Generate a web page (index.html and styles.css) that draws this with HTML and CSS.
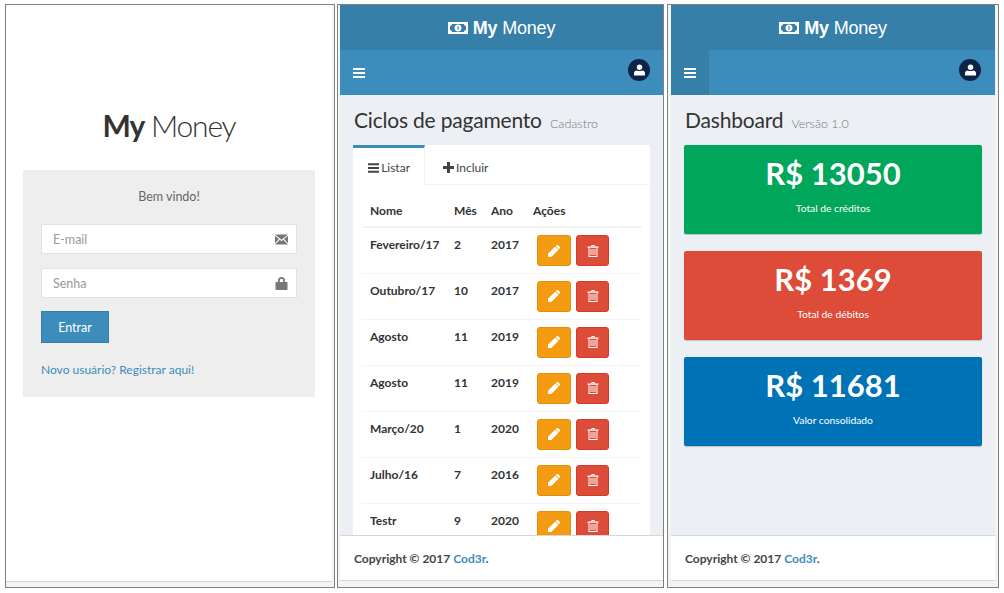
FILE: index.html
```html
<!DOCTYPE html>
<html lang="pt-BR">

<head>
    <meta charset="UTF-8">
    <title>My Money</title>
    <link rel="stylesheet" href="styles.css">
</head>

<body>
    <svg class="defs" width="0" height="0">
        <symbol id="i-bars" viewBox="0 0 12 10"><path d="M0 0h12v2H0zM0 4h12v2H0zM0 8h12v2H0z"/></symbol>
        <symbol id="i-plus" viewBox="0 0 11 11"><path d="M4 0h3v4h4v3H7v4H4V7H0V4h4z"/></symbol>
        <symbol id="i-pencil" viewBox="0 0 12 12"><path d="M0 12V8.800L7.300 1.500 10.500 4.700 3.200 12zM8.200 .6C9 -.2 9.700 -.2 10.400 .5L11.500 1.600C12.200 2.300 12.200 3 11.400 3.800L11 4.200 7.800 1z"/></symbol>
        <symbol id="i-trash" viewBox="0 0 11 12"><path fill-rule="evenodd" d="M3.500 1.500 4.200 0H6.800L7.500 1.500H11V2.700H10V12H1V2.700H0V1.500zM4.600 1.500H6.400L6.200 1H4.800zM2 2.700V11H9V2.700zM3 4H4V10H3zM5 4H6V10H5zM7 4H8V10H7z"/></symbol>
        <symbol id="i-user" viewBox="0 0 12 12"><circle cx="6" cy="3" r="3"/><path d="M0 12V9.500C0 7.500 1.500 6.500 3 6.500 4 7.300 8 7.300 9 6.500 10.500 6.500 12 7.500 12 9.500V12z"/></symbol>
        <symbol id="i-money" viewBox="0 0 20 12"><path fill-rule="evenodd" d="M0 0H20V12H0zM4 2C4 3.200 3.200 4 2 4V8C3.200 8 4 8.800 4 10H16C16 8.800 16.800 8 18 8V4C16.800 4 16 3.200 16 2zM10 2.500C12 2.500 13.500 4 13.500 6S12 9.500 10 9.500 6.500 8 6.500 6 8 2.500 10 2.500zM9 4.500V5.300H9.600V7.800H10.700V4.500z"/></symbol>
        <symbol id="i-mail" viewBox="0 0 14 11"><path d="M0 0H14L7 5.800zM0 1.500 4.300 5 0 9.500zM14 1.500V9.500L9.700 5zM5.200 5.800 7 7.300 8.800 5.800 14 11H0z"/></symbol>
        <symbol id="i-lock" viewBox="0 0 12 13"><path fill-rule="evenodd" d="M2.500 5V3.500C2.500 1.300 3.800 0 6 0S9.500 1.300 9.500 3.500V5H11C11.600 5 12 5.400 12 6V12C12 12.600 11.600 13 11 13H1C.4 13 0 12.600 0 12V6C0 5.400 .4 5 1 5zM4.300 5H7.700V3.500C7.700 2.500 7 1.800 6 1.800S4.300 2.500 4.300 3.500z"/></symbol>
    </svg>

    <div class="shots">
        <!-- login -->
        <section class="shot shot-login">
            <div class="login-page">
                <h1 class="login-logo"><b>My</b> Money</h1>
                <form class="login-box">
                    <p class="login-msg">Bem vindo!</p>
                    <div class="field">
                        <input type="text" placeholder="E-mail">
                        <svg class="field-icon mail"><use href="#i-mail"/></svg>
                    </div>
                    <div class="field">
                        <input type="password" placeholder="Senha">
                        <svg class="field-icon lock"><use href="#i-lock"/></svg>
                    </div>
                    <button class="btn-entrar" type="button">Entrar</button>
                    <a class="login-link" href="#">Novo usuário? Registrar aqui!</a>
                </form>
            </div>
        </section>

        <!-- ciclos -->
        <section class="shot shot-ciclos">
            <div class="app">
                <header class="brand">
                    <svg class="brand-icon"><use href="#i-money"/></svg>
                    <span><b>My</b> Money</span>
                </header>
                <nav class="navbar">
                    <a class="toggle" href="#"><svg class="toggle-icon"><use href="#i-bars"/></svg></a>
                    <span class="avatar"><svg class="avatar-icon"><use href="#i-user"/></svg></span>
                </nav>
                <main class="content">
                    <h2 class="page-title">Ciclos de pagamento <small>Cadastro</small></h2>
                    <div class="tabs">
                        <ul class="tab-list">
                            <li class="tab active"><svg class="tab-icon bars"><use href="#i-bars"/></svg>Listar</li>
                            <li class="tab"><svg class="tab-icon plus"><use href="#i-plus"/></svg>Incluir</li>
                        </ul>
                        <div class="tab-body">
                            <table class="ciclos">
                                <thead>
                                    <tr><th>Nome</th><th>Mês</th><th>Ano</th><th>Ações</th></tr>
                                </thead>
                                <tbody>
                                    <tr>
                                        <td>Fevereiro/17</td><td>2</td><td>2017</td>
                                        <td><span class="btn warn"><svg><use href="#i-pencil"/></svg></span><span class="btn danger"><svg><use href="#i-trash"/></svg></span></td>
                                    </tr>
                                    <tr>
                                        <td>Outubro/17</td><td>10</td><td>2017</td>
                                        <td><span class="btn warn"><svg><use href="#i-pencil"/></svg></span><span class="btn danger"><svg><use href="#i-trash"/></svg></span></td>
                                    </tr>
                                    <tr>
                                        <td>Agosto</td><td>11</td><td>2019</td>
                                        <td><span class="btn warn"><svg><use href="#i-pencil"/></svg></span><span class="btn danger"><svg><use href="#i-trash"/></svg></span></td>
                                    </tr>
                                    <tr>
                                        <td>Agosto</td><td>11</td><td>2019</td>
                                        <td><span class="btn warn"><svg><use href="#i-pencil"/></svg></span><span class="btn danger"><svg><use href="#i-trash"/></svg></span></td>
                                    </tr>
                                    <tr>
                                        <td>Março/20</td><td>1</td><td>2020</td>
                                        <td><span class="btn warn"><svg><use href="#i-pencil"/></svg></span><span class="btn danger"><svg><use href="#i-trash"/></svg></span></td>
                                    </tr>
                                    <tr>
                                        <td>Julho/16</td><td>7</td><td>2016</td>
                                        <td><span class="btn warn"><svg><use href="#i-pencil"/></svg></span><span class="btn danger"><svg><use href="#i-trash"/></svg></span></td>
                                    </tr>
                                    <tr>
                                        <td>Testr</td><td>9</td><td>2020</td>
                                        <td><span class="btn warn"><svg><use href="#i-pencil"/></svg></span><span class="btn danger"><svg><use href="#i-trash"/></svg></span></td>
                                    </tr>
                                </tbody>
                            </table>
                        </div>
                    </div>
                </main>
                <footer class="footer">Copyright © 2017 <a href="#">Cod3r</a>.</footer>
            </div>
        </section>

        <!-- dashboard -->
        <section class="shot shot-dash">
            <div class="app">
                <header class="brand">
                    <svg class="brand-icon"><use href="#i-money"/></svg>
                    <span><b>My</b> Money</span>
                </header>
                <nav class="navbar">
                    <a class="toggle hover" href="#"><svg class="toggle-icon"><use href="#i-bars"/></svg></a>
                    <span class="avatar"><svg class="avatar-icon"><use href="#i-user"/></svg></span>
                </nav>
                <main class="content">
                    <h2 class="page-title">Dashboard <small>Versão 1.0</small></h2>
                    <div class="small-box green">
                        <h3>R$ 13050</h3>
                        <p>Total de créditos</p>
                    </div>
                    <div class="small-box red">
                        <h3>R$ 1369</h3>
                        <p>Total de débitos</p>
                    </div>
                    <div class="small-box blue">
                        <h3>R$ 11681</h3>
                        <p>Valor consolidado</p>
                    </div>
                </main>
                <footer class="footer">Copyright © 2017 <a href="#">Cod3r</a>.</footer>
            </div>
        </section>
    </div>
</body>

</html>
```

FILE: styles.css
```css
* {
    box-sizing: border-box;
}

body {
    margin: 0;
    background-color: #fff;
    font-family: Lato, "Noto Sans", sans-serif;
    font-size: 14px;
    color: #333;
}

.defs {
    display: block;
    height: 0;
}

.shots {
    display: flex;
    gap: 2px;
    padding: 4px 5px 5px;
    height: 593px;
}

.shot {
    height: 584px;
    border: 1px solid #808080;
    background-color: #f4f4f4;
    flex: none;
}

.shot-login {
    width: 330px;
    padding: 0 2px 5px 0;
}

.shot-ciclos {
    width: 327px;
    padding: 0 0 6px 2px;
}

.shot-dash {
    width: 332px;
    margin-left: 1px;
    padding: 0 3px 6px 3px;
}

/* login */
.login-page {
    height: 100%;
    background-color: #fff;
    border-bottom: 1px solid #d2d6de;
    padding: 98px 17px 0;
}

.login-logo {
    margin: 0 0 23px;
    text-align: center;
    font-size: 30px;
    line-height: 44px;
    font-weight: 300;
    letter-spacing: -1.2px;
}

.login-logo b {
    font-weight: 700;
}

.login-box {
    display: flex;
    flex-direction: column;
    height: 227px;
    padding: 19px 18px;
    background-color: #eee;
}

.login-msg {
    margin: 0 0 19px;
    text-align: center;
    font-size: 12.5px;
    line-height: 16px;
    color: #666;
}

.field {
    display: flex;
    align-items: center;
    height: 30px;
    margin-bottom: 14px;
    padding-right: 8px;
    border: 1px solid #dfe2e8;
    background-color: #fff;
}

.field + .field {
    margin-bottom: 13px;
}

.field input {
    flex: 1;
    min-width: 0;
    border: 0;
    outline: 0;
    padding: 0 11px;
    font-family: inherit;
    font-size: 12.5px;
    background: transparent;
}

.field input::placeholder {
    color: #999;
}

.field-icon {
    width: 13px;
    fill: #777;
}

.field-icon.mail {
    height: 11px;
}

.field-icon.lock {
    height: 13px;
}

.btn-entrar {
    width: 68px;
    height: 32px;
    border: 1px solid #367fa9;
    background-color: #3c8dbc;
    color: #fff;
    font-family: inherit;
    font-size: 12.5px;
}

.login-link {
    margin-top: 19px;
    font-size: 12px;
    line-height: 16px;
    color: #3c8dbc;
    text-decoration: none;
}

/* app */
.app {
    display: flex;
    flex-direction: column;
    height: 100%;
    background-color: #ecf0f5;
}

.brand {
    display: flex;
    align-items: center;
    justify-content: center;
    gap: 5px;
    flex: none;
    height: 45px;
    padding-top: 1px;
    background-color: #367fa9;
    color: #fff;
    font-family: "Liberation Sans", Arial, sans-serif;
    font-size: 18px;
    letter-spacing: -0.2px;
}

.brand-icon {
    width: 20px;
    height: 12px;
    fill: #fff;
}

.navbar {
    display: flex;
    align-items: center;
    justify-content: space-between;
    flex: none;
    height: 45px;
    padding-right: 13px;
    background-color: #3c8dbc;
}

.shot-dash .navbar {
    padding-right: 14px;
}

.toggle {
    display: flex;
    align-items: center;
    justify-content: center;
    width: 38px;
    height: 45px;
}

.toggle.hover {
    background-color: #367fa9;
}

.toggle-icon {
    width: 12px;
    height: 10px;
    fill: #fff;
}

.avatar {
    display: flex;
    align-items: center;
    justify-content: center;
    width: 22px;
    height: 22px;
    margin-top: -5px;
    border-radius: 50%;
    background-color: #0d2347;
}

.avatar-icon {
    width: 11px;
    height: 12px;
    fill: #fff;
}

.content {
    flex: 1;
    min-height: 0;
    overflow: hidden;
    padding: 12px 13px 0;
}

.page-title {
    margin: 0 0 12px 1px;
    font-size: 21px;
    line-height: 26px;
    font-weight: 400;
    letter-spacing: -0.2px;
}

.page-title small {
    margin-left: 3px;
    font-size: 12.5px;
    line-height: 1;
    font-weight: 300;
    letter-spacing: 0;
    color: #777;
}

.tabs {
    background-color: #fff;
}

.tab-list {
    display: flex;
    margin: 0;
    padding: 0;
    list-style: none;
    border-bottom: 1px solid #f4f4f4;
    height: 40px;
}

.tab {
    display: flex;
    align-items: center;
    padding: 5px 18px 0;
    height: 40px;
    font-size: 12px;
    color: #444;
}

.tab.active {
    width: 72px;
    border-top: 3px solid #3c8dbc;
    border-right: 1px solid #f4f4f4;
    background-color: #fff;
    padding: 2px 14px 0 15px;
}

.tab-icon {
    margin-right: 2px;
    fill: #444;
}

.tab-icon.bars {
    width: 12px;
    height: 10px;
}

.tab-icon.plus {
    width: 11px;
    height: 11px;
}

.tab-body {
    padding: 9px 8px 0 9px;
}

.ciclos {
    width: 280px;
    border-collapse: collapse;
    table-layout: fixed;
}

.ciclos th,
.ciclos td {
    padding: 8px;
    text-align: left;
    vertical-align: top;
    font-size: 12px;
    line-height: 16px;
    font-weight: 700;
}

.ciclos th {
    height: 33px;
    padding-top: 9px;
    padding-bottom: 6px;
    border-bottom: 2px solid #f4f4f4;
}

.ciclos td {
    height: 46px;
    padding-top: 9px;
    border-bottom: 1px solid #f4f4f4;
    color: #333;
}

.ciclos th:nth-child(1) {
    width: 84px;
}

.ciclos th:nth-child(2) {
    width: 37px;
}

.ciclos th:nth-child(3) {
    width: 42px;
}

.ciclos td:last-child {
    padding: 7px 0 0 12px;
}

.btn {
    display: inline-flex;
    align-items: center;
    justify-content: center;
    width: 34px;
    height: 31px;
    border-radius: 3px;
    vertical-align: top;
}

.btn svg {
    fill: #fff;
    width: 12px;
    height: 12px;
}

.btn + .btn {
    width: 33px;
    margin-left: 5px;
}

.warn {
    background-color: #f39c12;
    border: 1px solid #e08e0b;
}

.danger {
    background-color: #dd4b39;
    border: 1px solid #d73925;
}

.footer {
    flex: none;
    height: 46px;
    padding: 15px 14px;
    background-color: #fff;
    border-top: 1px solid #d2d6de;
    border-bottom: 1px solid #d2d6de;
    font-size: 12px;
    line-height: 16px;
    font-weight: 700;
    color: #444;
}

.footer a {
    color: #3c8dbc;
    text-decoration: none;
}

/* dashboard */
.small-box {
    height: 89px;
    margin-bottom: 17px;
    padding-top: 9px;
    border-radius: 2px;
    color: #fff;
    text-align: center;
    box-shadow: 0 1px 1px rgba(0, 0, 0, 0.2);
}

.small-box h3 {
    margin: 0 0 9px;
    font-size: 31px;
    line-height: 38px;
    font-weight: 700;
}

.small-box p {
    margin: 0;
    font-size: 10.3px;
    line-height: 14px;
}

.green {
    background-color: #00a65a;
}

.red {
    background-color: #dd4b39;
}

.blue {
    background-color: #0073b7;
}
```
